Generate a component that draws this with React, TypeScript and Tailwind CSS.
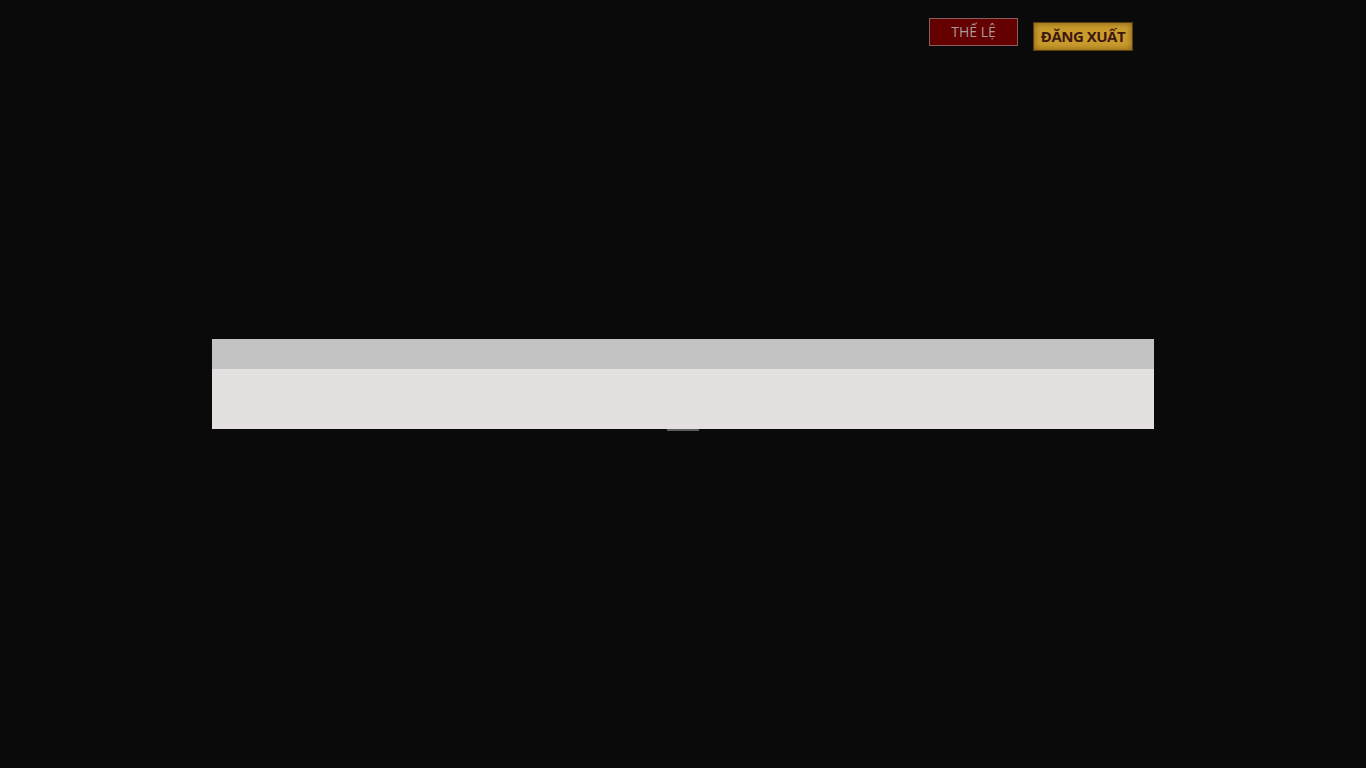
export default function App() {
  return (
    <div className="min-h-screen w-full bg-[#0a0a0a]" style={{ fontFamily: '"Open Sans", "Noto Sans", sans-serif' }}>
      <div className="mx-auto w-[942px]">
        {/* top buttons */}
        <div className="flex items-start justify-end gap-[15px] pr-[21px] pt-[18px]">
          <button className="h-[28px] w-[89px] border border-[#8a5c5c] bg-[#650000] text-[14px] leading-none text-[#a69c9c]">
            THẾ LỆ
          </button>
          <button className="mt-[4px] h-[29px] w-[100px] border border-[#5a3e10] bg-[#c99c2c] text-[15px] font-bold leading-none tracking-[-0.5px] text-[#3e1710] shadow-[inset_0_0_6px_rgba(90,60,10,0.7)]">
            ĐĂNG XUẤT
          </button>
        </div>

        {/* panel */}
        <div className="mt-[288px]">
          <div className="h-[30px] bg-[#c4c3c3]" />
          <div className="h-[60px] bg-[#e3e0df]" />
          <div className="mx-auto h-[2px] w-[32px] bg-[#5c5c5c]" />
        </div>
      </div>
    </div>
  );
}
